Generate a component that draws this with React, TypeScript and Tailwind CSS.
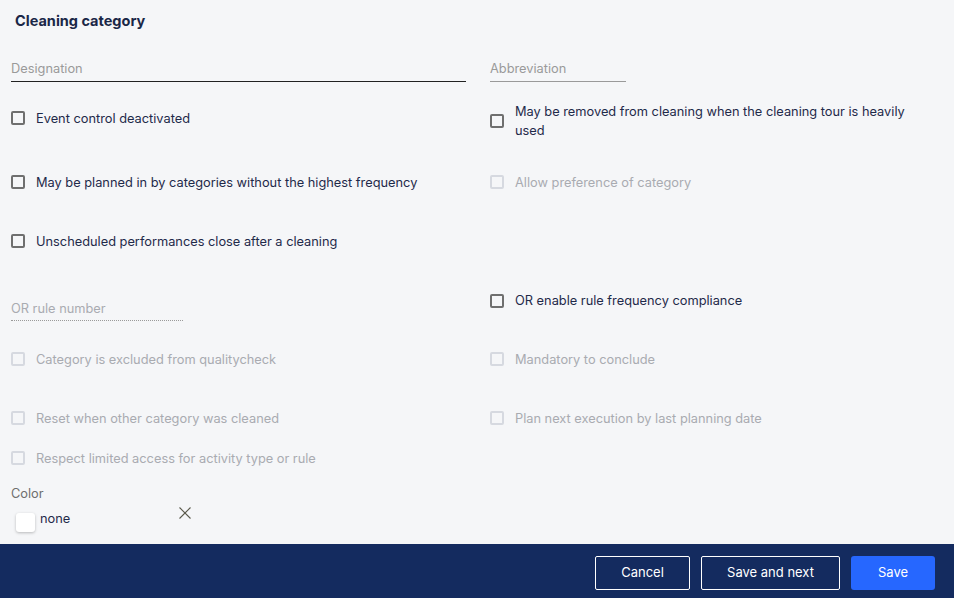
import React from "react";

const font = { fontFamily: "Inter, 'Noto Sans', sans-serif" };

function Check({ label, disabled }: { label: string; disabled?: boolean }) {
  return (
    <div className="flex items-center">
      <div
        className={
          "w-[14px] h-[14px] shrink-0 rounded-[2px] border-2 " +
          (disabled ? "border-[#d6d9e0]" : "border-[#6f6f6f]")
        }
      />
      <span
        className={
          "ml-[11px] text-[12.8px] leading-[19px] " +
          (disabled ? "text-[#a9abb1]" : "text-[#1f2a4a]")
        }
      >
        {label}
      </span>
    </div>
  );
}

export default function App() {
  return (
    <div className="h-screen flex flex-col bg-[#f5f6f8]" style={font}>
      <div className="flex-1 flex flex-col">
        <div className="h-[42px] flex items-center pl-[15px]">
          <h1 className="text-[14.5px] font-bold text-[#1a2747]">Cleaning category</h1>
        </div>

        <div className="grid grid-cols-[479px_1fr] pl-[11px]">
          <div className="pt-[19px] pr-[24px]">
            <div className="text-[12.8px] leading-[16px] text-[#9a9a9a] pb-[4px] border-b border-[#222]">
              Designation
            </div>
          </div>
          <div className="pt-[19px]">
            <div className="w-[136px] text-[12.8px] leading-[16px] text-[#9a9a9a] pb-[4px] border-b border-[#9a9a9a]">
              Abbreviation
            </div>
          </div>
        </div>

        <div className="grid grid-cols-[479px_1fr] pl-[11px] h-[74px] items-center">
          <div className="-mt-[2px]">
            <Check label="Event control deactivated" />
          </div>
          <div className="w-[425px] mt-[4px]">
            <Check label="May be removed from cleaning when the cleaning tour is heavily used" />
          </div>
        </div>

        <div className="grid grid-cols-[479px_1fr] pl-[11px] h-[52px] items-center">
          <Check label="May be planned in by categories without the highest frequency" />
          <Check label="Allow preference of category" disabled />
        </div>

        <div className="grid grid-cols-[479px_1fr] pl-[11px] h-[66px] items-center">
          <Check label="Unscheduled performances close after a cleaning" />
          <div />
        </div>

        <div className="grid grid-cols-[479px_1fr] pl-[11px] h-[56px] items-start">
          <div className="pt-[27px]">
            <div className="w-[172px] text-[12.8px] leading-[16px] text-[#a9abb1] pb-[3px] border-b border-dotted border-[#9a9a9a]">
              OR rule number
            </div>
          </div>
          <div className="pt-[17px]">
            <Check label="OR enable rule frequency compliance" />
          </div>
        </div>

        <div className="grid grid-cols-[479px_1fr] pl-[11px] h-[58px] items-center">
          <Check label="Category is excluded from qualitycheck" disabled />
          <Check label="Mandatory to conclude" disabled />
        </div>

        <div className="grid grid-cols-[479px_1fr] pl-[11px] h-[60px] items-center">
          <Check label="Reset when other category was cleaned" disabled />
          <Check label="Plan next execution by last planning date" disabled />
        </div>

        <div className="grid grid-cols-[479px_1fr] pl-[11px] h-[20px] items-center">
          <Check label="Respect limited access for activity type or rule" disabled />
          <div />
        </div>

        <div className="pl-[11px] pt-[18px] text-[12.8px] leading-[16px] text-[#6e6e6e]">Color</div>
        <div className="flex items-start pl-[16px] pt-[11px]">
          <div className="w-[19px] h-[19px] rounded-[3px] bg-white shadow-[0_1px_3px_rgba(0,0,0,0.25)]" />
          <span className="ml-[5px] -mt-[2px] text-[12.8px] leading-[16px] text-[#1f2a4a]">none</span>
          <svg className="ml-[108px] -mt-[7px]" width="14" height="14" viewBox="0 0 14 14">
            <path d="M1.5 1.5 L12.5 12.5 M12.5 1.5 L1.5 12.5" stroke="#5b5a4c" strokeWidth="1.1" fill="none" />
          </svg>
        </div>
      </div>

      <div className="h-[54px] bg-[#142b5f] flex justify-end items-start pt-[12px] pr-[19px] gap-[11px]">
        <button className="w-[95px] h-[34px] border border-white rounded-[2px] text-white text-[13px]">
          Cancel
        </button>
        <button className="w-[139px] h-[34px] border border-white rounded-[2px] text-white text-[13px]">
          Save and next
        </button>
        <button className="w-[84px] h-[34px] bg-[#2667ff] rounded-[3px] text-white text-[13px]">
          Save
        </button>
      </div>
    </div>
  );
}
